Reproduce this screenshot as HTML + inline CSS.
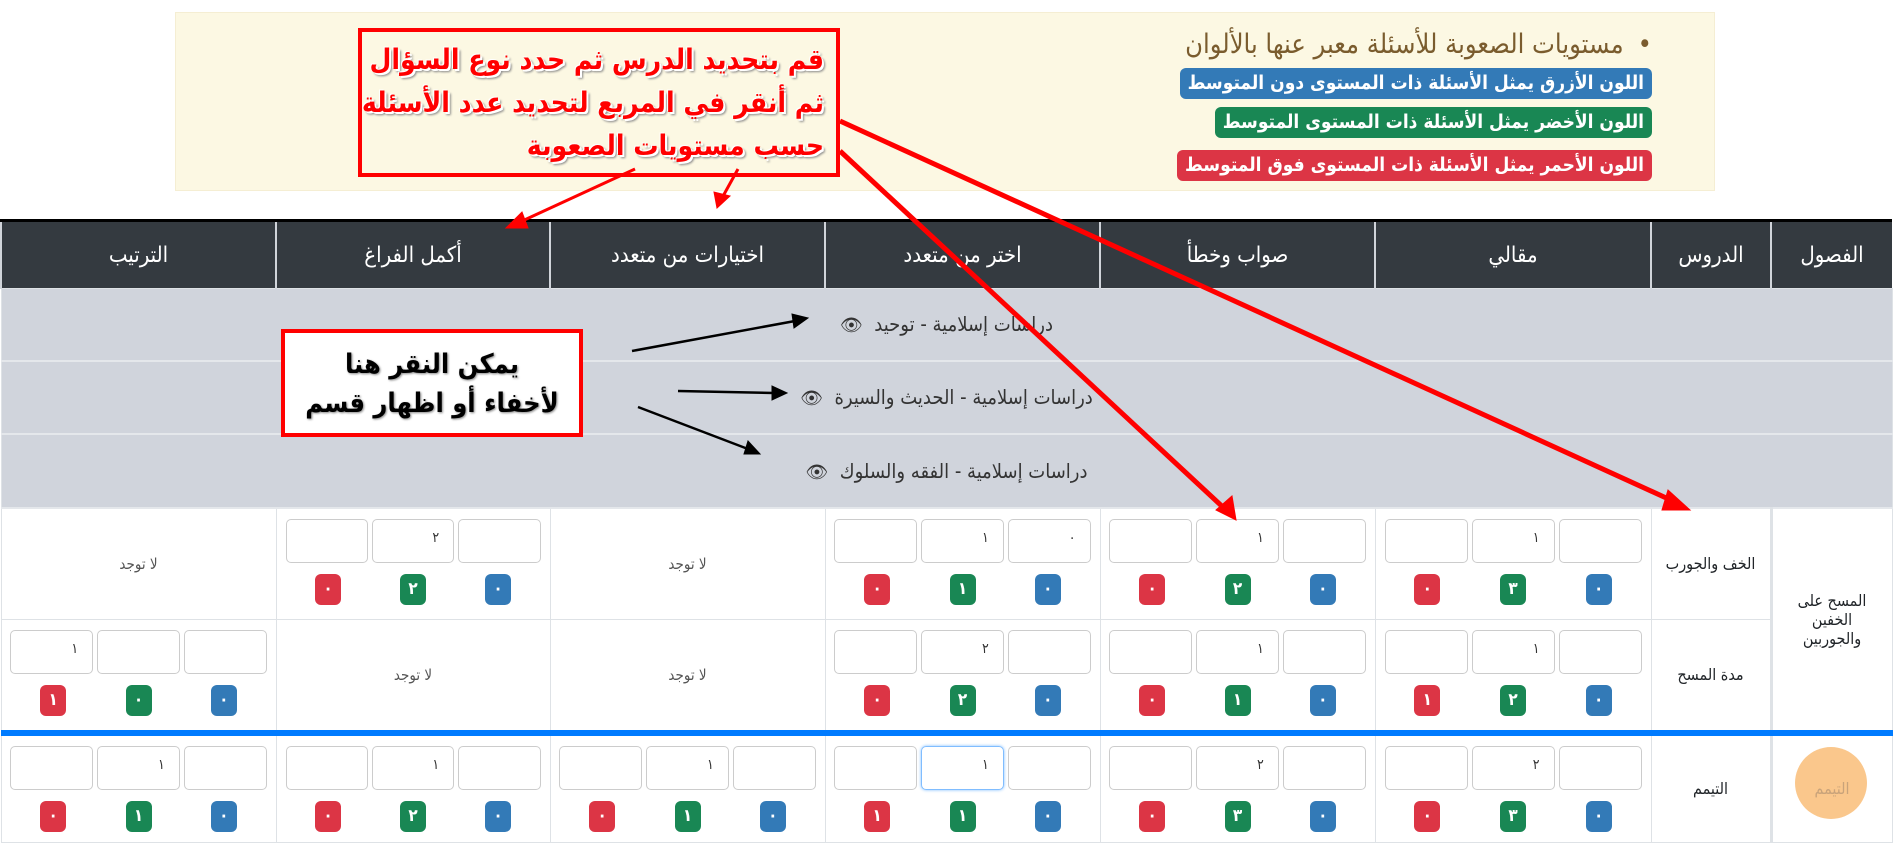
<!DOCTYPE html>
<html><head><meta charset="utf-8">
<style>
*{box-sizing:border-box;margin:0;padding:0}
body{width:1897px;height:840px;overflow:hidden;background:#fff;font-family:"DejaVu Sans","Liberation Sans",sans-serif;position:relative;color:#212529}
i{font-style:normal}
.cd{font-family:"DejaVu Sans Condensed","DejaVu Sans",sans-serif}
.alert{position:absolute;left:175px;top:12px;width:1540px;height:179px;background:#fcf8e3;border:1px solid #f5eed3;direction:rtl}
.ttl{position:absolute;right:62px;top:16px;font-size:27px;color:#7a5c2e;white-space:nowrap}
.ttl:before{content:"•";margin-left:14px}
.lg{position:absolute;right:62px;height:31px;border-radius:6px;color:#fff;font-weight:bold;font-size:19px;line-height:31px;padding:0 8px;white-space:nowrap}
table{position:absolute;left:0;top:219px;width:1891px;border-collapse:collapse;table-layout:fixed;direction:rtl}
th{background:#343a40;color:#fff;font-weight:normal;font-size:22px;height:68px;border-left:2px solid #d0d4da;border-top:3px solid #000}
td.g{background:#d0d4dc;text-align:center;font-size:20px;color:#333;border-bottom:2px solid #e4e7eb}
td{border:1px solid #dee2e6;vertical-align:middle;text-align:center;font-size:16px}
.c{padding:0 9px;vertical-align:top}
.ins{display:flex;gap:4px;margin-top:10px}
.in{flex:1;height:44px;border:1px solid #ccc;border-radius:5px;text-align:right;padding:10px 14px 0 0;font-size:14px;color:#333}
.bs{display:flex;margin-top:11px}
.bs span{flex:1;display:flex;justify-content:center}
.b{width:26px;height:31px;border-radius:6px;color:#fff;font-weight:bold;font-size:17px;line-height:31px;text-align:center}
.bl{background:#337ab7}.gr{background:#198754}.rd{background:#dc3545}
.n{color:#555;font-size:15px}
</style></head><body>
<div class="alert cd">
<div class="ttl">مستويات الصعوبة للأسئلة معبر عنها بالألوان</div>
<div class="lg bl" style="top:55px">اللون الأزرق يمثل الأسئلة ذات المستوى دون المتوسط</div>
<div class="lg gr" style="top:94px">اللون الأخضر يمثل الأسئلة ذات المستوى المتوسط</div>
<div class="lg rd" style="top:137px">اللون الأحمر يمثل الأسئلة ذات المستوى فوق المتوسط</div>
</div>

<table class="cd">
<colgroup><col style="width:121px"><col style="width:120px"><col style="width:276px"><col style="width:275px"><col style="width:275px"><col style="width:275px"><col style="width:274px"><col style="width:275px"></colgroup>
<tr><th>الفصول</th><th>الدروس</th><th>مقالي</th><th>صواب وخطأ</th><th>اختر من متعدد</th><th>اختيارات من متعدد</th><th>أكمل الفراغ</th><th>الترتيب</th></tr>
<tr><td class="g" colspan="8" style="height:72px">دراسات إسلامية - توحيد&nbsp; <span style="font-size:18px">&#x1F441;&#xFE0E;</span></td></tr>
<tr><td class="g" colspan="8" style="height:73px">دراسات إسلامية - الحديث والسيرة&nbsp; <span style="font-size:18px">&#x1F441;&#xFE0E;</span></td></tr>
<tr><td class="g" colspan="8" style="height:74px">دراسات إسلامية - الفقه والسلوك&nbsp; <span style="font-size:18px">&#x1F441;&#xFE0E;</span></td></tr>
<tr style="height:112px">
<td rowspan="2" style="border-left:3px solid #dee2e6">المسح على<br>الخفين<br>والجوربين</td>
<td>الخف والجورب</td>
<td class="c"><div class="ins"><div class="in"></div><div class="in">١</div><div class="in"></div></div><div class="bs"><span><i class="b bl">٠</i></span><span><i class="b gr">٣</i></span><span><i class="b rd">٠</i></span></div></td>
<td class="c"><div class="ins"><div class="in"></div><div class="in">١</div><div class="in"></div></div><div class="bs"><span><i class="b bl">٠</i></span><span><i class="b gr">٢</i></span><span><i class="b rd">٠</i></span></div></td>
<td class="c"><div class="ins"><div class="in">٠</div><div class="in">١</div><div class="in"></div></div><div class="bs"><span><i class="b bl">٠</i></span><span><i class="b gr">١</i></span><span><i class="b rd">٠</i></span></div></td>
<td class="n">لا توجد</td>
<td class="c"><div class="ins"><div class="in"></div><div class="in">٢</div><div class="in"></div></div><div class="bs"><span><i class="b bl">٠</i></span><span><i class="b gr">٢</i></span><span><i class="b rd">٠</i></span></div></td>
<td class="n">لا توجد</td>
</tr>
<tr style="height:113px">
<td>مدة المسح</td>
<td class="c"><div class="ins"><div class="in"></div><div class="in">١</div><div class="in"></div></div><div class="bs"><span><i class="b bl">٠</i></span><span><i class="b gr">٢</i></span><span><i class="b rd">١</i></span></div></td>
<td class="c"><div class="ins"><div class="in"></div><div class="in">١</div><div class="in"></div></div><div class="bs"><span><i class="b bl">٠</i></span><span><i class="b gr">١</i></span><span><i class="b rd">٠</i></span></div></td>
<td class="c"><div class="ins"><div class="in"></div><div class="in">٢</div><div class="in"></div></div><div class="bs"><span><i class="b bl">٠</i></span><span><i class="b gr">٢</i></span><span><i class="b rd">٠</i></span></div></td>
<td class="n">لا توجد</td>
<td class="n">لا توجد</td>
<td class="c"><div class="ins"><div class="in"></div><div class="in"></div><div class="in">١</div></div><div class="bs"><span><i class="b bl">٠</i></span><span><i class="b gr">٠</i></span><span><i class="b rd">١</i></span></div></td>
</tr>
<tr style="height:110px;border-top:6px solid #007bff">
<td style="border-left:3px solid #dee2e6;position:relative"><div style="position:absolute;left:22px;top:11px;width:72px;height:72px;border-radius:50%;background:#fac78c"></div><span style="position:relative;color:#c9a37a">التيمم</span></td>
<td>التيمم</td>
<td class="c"><div class="ins"><div class="in"></div><div class="in">٢</div><div class="in"></div></div><div class="bs"><span><i class="b bl">٠</i></span><span><i class="b gr">٣</i></span><span><i class="b rd">٠</i></span></div></td>
<td class="c"><div class="ins"><div class="in"></div><div class="in">٢</div><div class="in"></div></div><div class="bs"><span><i class="b bl">٠</i></span><span><i class="b gr">٣</i></span><span><i class="b rd">٠</i></span></div></td>
<td class="c"><div class="ins"><div class="in"></div><div class="in" style="border-color:#80bdff;box-shadow:0 0 3px #80bdff">١</div><div class="in"></div></div><div class="bs"><span><i class="b bl">٠</i></span><span><i class="b gr">١</i></span><span><i class="b rd">١</i></span></div></td>
<td class="c"><div class="ins"><div class="in"></div><div class="in">١</div><div class="in"></div></div><div class="bs"><span><i class="b bl">٠</i></span><span><i class="b gr">١</i></span><span><i class="b rd">٠</i></span></div></td>
<td class="c"><div class="ins"><div class="in"></div><div class="in">١</div><div class="in"></div></div><div class="bs"><span><i class="b bl">٠</i></span><span><i class="b gr">٢</i></span><span><i class="b rd">٠</i></span></div></td>
<td class="c"><div class="ins"><div class="in"></div><div class="in">١</div><div class="in"></div></div><div class="bs"><span><i class="b bl">٠</i></span><span><i class="b gr">١</i></span><span><i class="b rd">٠</i></span></div></td>
</tr>
</table>

<div class="cd" style="position:absolute;left:358px;top:28px;width:482px;height:149px;border:4px solid #f00;direction:rtl;text-align:right;padding:6px 12px 0 0;color:#f00;font-weight:bold;font-size:28px;line-height:43px;white-space:nowrap;overflow:hidden;text-shadow:2px 2px 0 #fff,-1px -1px 0 #fff,3px 3px 2px #888">قم بتحديد الدرس ثم حدد نوع السؤال<br>ثم أنقر في المربع لتحديد عدد الأسئلة<br>حسب مستويات الصعوبة</div>
<div class="cd" style="position:absolute;left:281px;top:329px;width:302px;height:108px;border:4px solid #f00;background:#fff;direction:rtl;text-align:center;padding-top:12px;color:#000;font-weight:bold;font-size:27px;line-height:39px;white-space:nowrap;text-shadow:1px 1px 2px #888">يمكن النقر هنا<br>لأخفاء أو اظهار قسم</div>

<svg width="1897" height="840" style="position:absolute;left:0;top:0" viewBox="0 0 1897 840">
<g stroke="#f00" fill="#f00">
<line x1="635" y1="169" x2="520" y2="222" stroke-width="3"/><polygon points="506,228 522,212 528,228"/>
<line x1="738" y1="169" x2="722" y2="198" stroke-width="3"/><polygon points="717,208 714,192 730,196"/>
<line x1="840" y1="121" x2="1675" y2="502" stroke-width="5"/><polygon points="1690,510 1668,490 1662,510"/>
<line x1="840" y1="151" x2="1226" y2="510" stroke-width="5"/><polygon points="1236,520 1232,496 1216,510"/>
</g>
<g stroke="#000" fill="#000">
<line x1="632" y1="351" x2="795" y2="321" stroke-width="2.5"/><polygon points="808,318 792,314 794,328"/>
<line x1="678" y1="391" x2="774" y2="393" stroke-width="2.5"/><polygon points="787,393 772,386 772,400"/>
<line x1="638" y1="407" x2="748" y2="449" stroke-width="2.5"/><polygon points="760,454 748,441 744,454"/>
</g>
</svg>
</body></html>
